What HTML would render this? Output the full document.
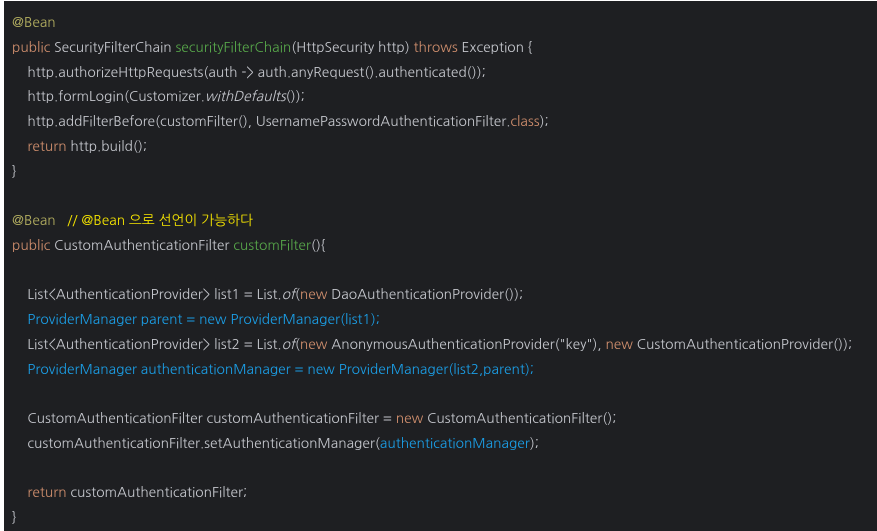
<!DOCTYPE html>
<html><head><meta charset="utf-8"><style>
html,body{margin:0;padding:0;background:#fff;}
.box{position:absolute;left:4px;top:1px;width:873px;height:530px;background:#1e1f22;}
pre{position:absolute;left:8px;top:9px;margin:0;font-family:"NanumGothic","Liberation Sans",sans-serif;font-size:13.75px;line-height:24.75px;color:#c4c6cc;white-space:pre;}
.k{color:#cf8e6d}.g{color:#57a64a}.a{color:#b3ae60}.c{color:#f4e300}.b{color:#1b9ee6}.i{font-style:italic}
</style></head><body><div class="box"><pre><span class="a">@Bean</span>
<span class="k">public</span> SecurityFilterChain <span class="g">securityFilterChain</span>(HttpSecurity http) <span class="k">throws</span> Exception {
    http.authorizeHttpRequests(auth -&gt; auth.anyRequest().authenticated());
    http.formLogin(Customizer.<span class="i">withDefaults</span>());
    http.addFilterBefore(customFilter(), UsernamePasswordAuthenticationFilter.<span class="k">class</span>);
    <span class="k">return</span> http.build();
}

<span class="a">@Bean</span>   <span class="c">// @Bean 으로 선언이 가능하다</span>
<span class="k">public</span> CustomAuthenticationFilter <span class="g">customFilter</span>(){

    List&lt;AuthenticationProvider&gt; list1 = List.<span class="i">of</span>(<span class="k">new</span> DaoAuthenticationProvider());
    <span class="b">ProviderManager parent = new ProviderManager(list1);</span>
    List&lt;AuthenticationProvider&gt; list2 = List.<span class="i">of</span>(<span class="k">new</span> AnonymousAuthenticationProvider("key"), <span class="k">new</span> CustomAuthenticationProvider());
    <span class="b">ProviderManager authenticationManager = new ProviderManager(list2,parent);</span>

    CustomAuthenticationFilter customAuthenticationFilter = <span class="k">new</span> CustomAuthenticationFilter();
    customAuthenticationFilter.setAuthenticationManager(<span class="b">authenticationManager</span>);

    <span class="k">return</span> customAuthenticationFilter;
}</pre></div></body></html>
